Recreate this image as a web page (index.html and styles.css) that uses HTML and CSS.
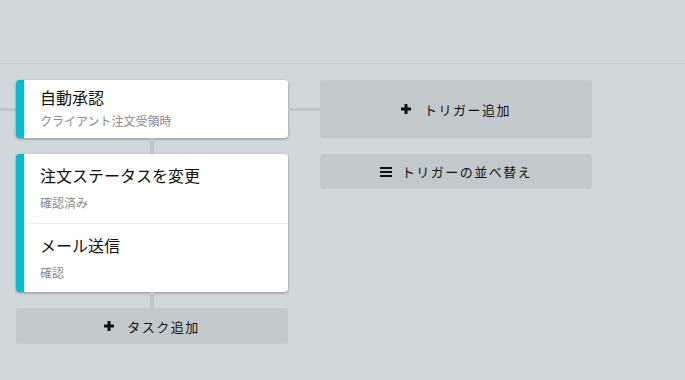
FILE: index.html
```html
<!DOCTYPE html>
<html lang="ja">
<head>
    <meta charset="UTF-8">
    <title>ワークフロー</title>
    <link rel="stylesheet" href="styles.css">
</head>
<body>
    <!-- top bar area -->
    <header class="topbar"></header>

    <main class="board">
        <!-- tasks lane -->
        <div class="lane-tasks">
            <div class="trigger-row">
                <div class="hline stub"></div>
                <div class="card">
                    <div class="step step-first">
                        <div class="step-title">自動承認</div>
                        <div class="step-sub">クライアント注文受領時</div>
                    </div>
                </div>
            </div>
            <div class="vline"></div>
            <div class="card">
                <div class="step">
                    <div class="step-title">注文ステータスを変更</div>
                    <div class="step-sub">確認済み</div>
                </div>
                <div class="step">
                    <div class="step-title">メール送信</div>
                    <div class="step-sub">確認</div>
                </div>
            </div>
            <div class="vline"></div>
            <button class="btn btn-task">
                <svg class="ico" width="10" height="10" viewBox="0 0 10 10"><rect x="3.5" y="0" width="3" height="10"/><rect x="0" y="3.5" width="10" height="3"/></svg>
                タスク追加
            </button>
        </div>

        <!-- triggers lane -->
        <div class="lane-triggers">
            <div class="trigger-row">
                <div class="hline link"></div>
                <button class="btn btn-trigger">
                    <svg class="ico" width="10" height="10" viewBox="0 0 10 10"><rect x="3.5" y="0" width="3" height="10"/><rect x="0" y="3.5" width="10" height="3"/></svg>
                    トリガー追加
                </button>
            </div>
            <button class="btn btn-sort">
                <svg class="ico" width="12" height="10" viewBox="0 0 12 10"><rect x="0" y="0" width="12" height="2"/><rect x="0" y="4" width="12" height="2"/><rect x="0" y="8" width="12" height="2"/></svg>
                トリガーの並べ替え
            </button>
        </div>
    </main>
</body>
</html>
```

FILE: styles.css
```css
body {
    margin: 0;
    padding: 0;
    background: #d0d8db;
    font-family: "Noto Sans CJK JP", "Noto Sans", sans-serif;
    color: #111;
    height: 380px;
    overflow: hidden;
}
.topbar {
    height: 63px;
    border-bottom: 1px solid #c4cccf;
}
.board {
    display: flex;
    padding-top: 16px;
}
.lane-tasks {
    display: flex;
    flex-direction: column;
    width: 288px;
}
.lane-triggers {
    display: flex;
    flex-direction: column;
}
.trigger-row {
    display: flex;
    align-items: center;
}
.hline {
    height: 3px;
    background: #bec6c9;
}
.stub {
    width: 16px;
}
.link {
    width: 32px;
}
.vline {
    width: 4px;
    height: 16px;
    margin-left: 150px;
    background: #bec6c9;
}
.card {
    width: 264px;
    margin-left: 16px;
    background: #fff;
    border-left: 8px solid #00bcd4;
    border-radius: 4px;
    box-shadow: 0 1px 3px rgba(0,0,0,0.35);
}
.trigger-row .card {
    margin-left: 0;
}
.step {
    padding: 11px 16px 12px;
    border-bottom: 1px solid #ececec;
    display: flex;
    flex-direction: column;
    gap: 10px;
}
.step:last-child {
    border-bottom: none;
    padding-bottom: 11px;
}
.step.step-first {
    padding: 7px 16px 9px;
    gap: 6px;
}
.step-title {
    font-size: 16px;
    line-height: 20px;
}
.step-sub {
    font-size: 12px;
    line-height: 16px;
    color: #8a8a8a;
}
.btn {
    display: flex;
    align-items: center;
    justify-content: center;
    gap: 13px;
    width: 272px;
    border: none;
    border-radius: 4px;
    background: #c2c9cc;
    font-family: inherit;
    font-size: 13px;
    letter-spacing: 1.5px;
    color: #111;
    padding: 0;
}
.btn-task {
    margin-left: 16px;
    height: 36px;
}
.btn-trigger {
    height: 58px;
}
.btn-sort {
    margin-left: 32px;
    margin-top: 16px;
    height: 35px;
    gap: 10px;
}
.ico {
    fill: #111;
}
```
